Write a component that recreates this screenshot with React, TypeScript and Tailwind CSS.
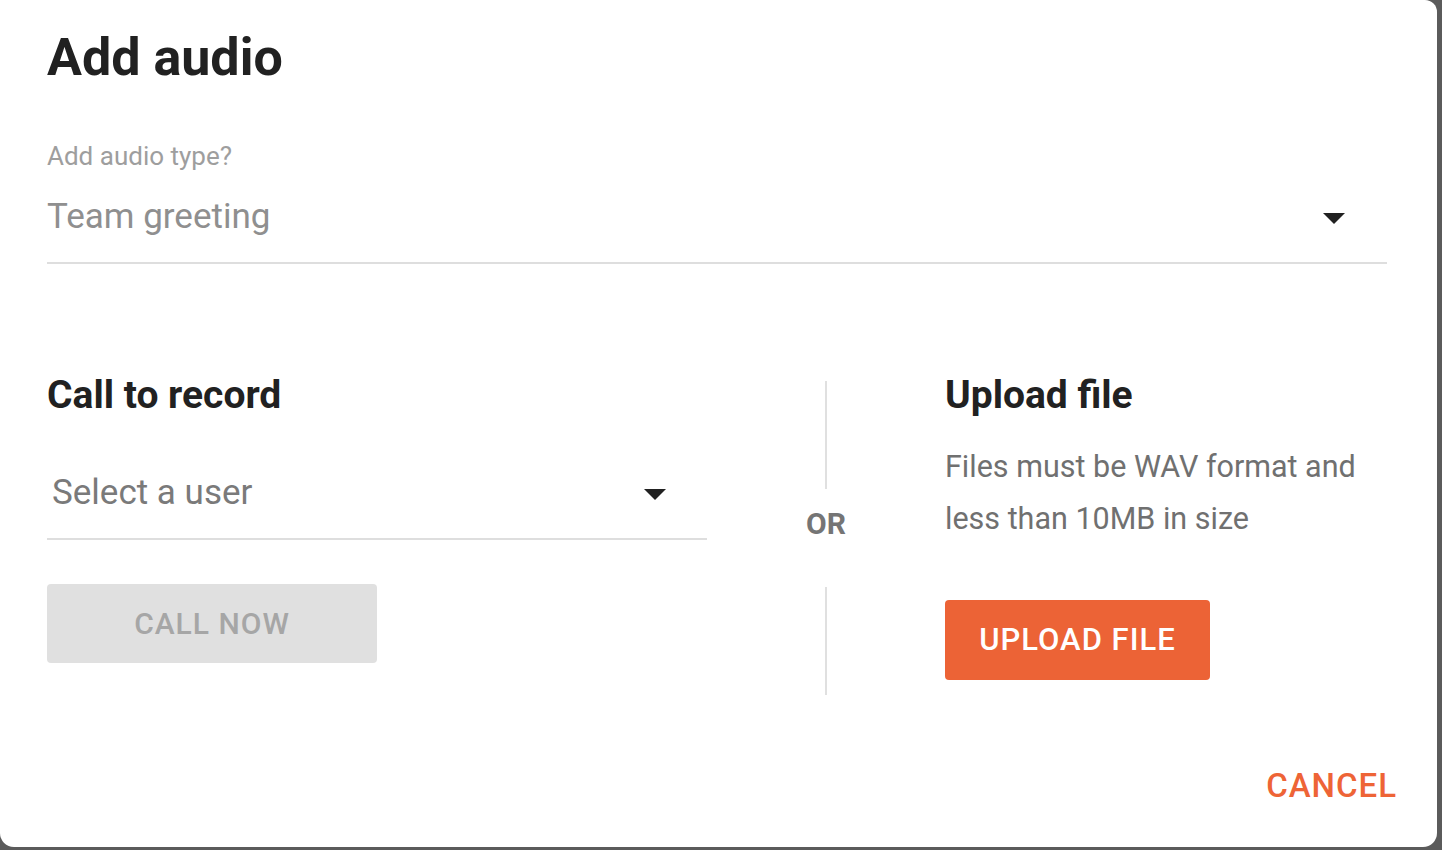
import { ReactNode } from "react";

function Caret({ className = "" }: { className?: string }) {
  return (
    <svg
      width="22"
      height="11"
      viewBox="0 0 22 11"
      className={className}
      aria-hidden="true"
    >
      <path d="M0 0h22L11 11z" fill="#212121" />
    </svg>
  );
}

function SelectField({
  children,
  className = "",
  textClass = "",
  caretClass = "",
}: {
  children: ReactNode;
  className?: string;
  textClass?: string;
  caretClass?: string;
}) {
  return (
    <div
      className={`flex items-center justify-between border-b-2 border-[#dedede] ${className}`}
    >
      <span className={textClass}>{children}</span>
      <Caret className={caretClass} />
    </div>
  );
}

export default function App() {
  return (
    <div className="h-[850px] w-[1442px] overflow-hidden bg-[#5b5b5b] font-['Roboto','Liberation_Sans',sans-serif]">
      <div className="flex h-[847px] w-[1437px] flex-col rounded-tr-[12px] rounded-b-[14px] bg-white pl-[47px] pr-[40px] pt-8">
        <h1 className="text-[52px] font-bold leading-none text-[#212121]">
          Add audio
        </h1>

        <p className="mt-[59px] text-[26px] leading-none text-[#9e9e9e]">
          Add audio type?
        </p>

        <SelectField
          className="mt-[30px] w-[1340px] pb-[28px]"
          textClass="text-[35px] leading-none text-[#8f8f8f]"
          caretClass="mr-[42px] mt-1"
        >
          Team greeting
        </SelectField>

        <div className="mt-[112px] flex items-start">
          {/* call to record */}
          <div className="flex w-[660px] flex-col items-start">
            <h2 className="text-[39px] font-bold leading-none text-[#212121]">
              Call to record
            </h2>
            <SelectField
              className="mt-[60px] w-full pb-[28px] pl-[5px]"
              textClass="text-[35px] leading-none text-[#7a7a7a]"
              caretClass="mr-[41px] mt-1"
            >
              Select a user
            </SelectField>
            <button
              disabled
              className="mt-[44px] h-[79px] w-[330px] rounded-[4px] bg-[#e0e0e0] text-[30px] font-medium tracking-[1px] text-[#a6a6a6]"
            >
              CALL NOW
            </button>
          </div>

          {/* divider */}
          <div className="flex w-[238px] flex-col items-center pt-[5px]">
            <div className="h-[108px] w-[2px] bg-[#e0e0e0]" />
            <span className="mt-[20px] text-[30px] font-bold leading-none text-[#757575]">
              OR
            </span>
            <div className="mt-[48px] h-[108px] w-[2px] bg-[#e0e0e0]" />
          </div>

          {/* upload */}
          <div className="flex flex-col items-start">
            <h2 className="text-[39px] font-bold leading-none text-[#212121]">
              Upload file
            </h2>
            <p className="mt-[26px] text-[30.5px] leading-[52px] text-[#707070]">
              Files must be WAV format and
              <br />
              less than 10MB in size
            </p>
            <button className="mt-[55px] h-[80px] w-[265px] rounded-[4px] bg-[#ec6336] text-[31px] font-medium tracking-[1px] text-white">
              UPLOAD FILE
            </button>
          </div>
        </div>

        <div className="mt-[74px] flex justify-end">
          <button className="text-[33px] font-medium leading-none tracking-[1px] text-[#ee6436]">
            CANCEL
          </button>
        </div>
      </div>
    </div>
  );
}
